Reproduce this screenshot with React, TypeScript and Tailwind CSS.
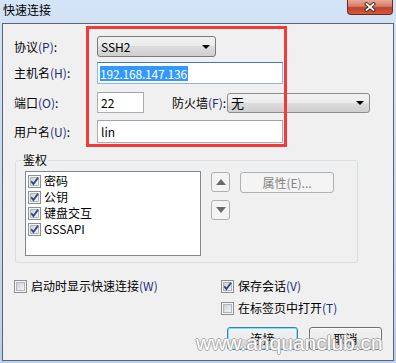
import React from "react";

const M = ({ c }: { c: string }) => <span className="text-[#1f2a7a]">({c})</span>;

function Check({ checked }: { checked?: boolean }) {
  return (
    <svg width="13" height="13" viewBox="0 0 13 13" className="shrink-0">
      <defs>
        <linearGradient id="cbg" x1="0" y1="0" x2="1" y2="1">
          <stop offset="0" stopColor="#c9ced4" />
          <stop offset="1" stopColor="#f7f7f8" />
        </linearGradient>
      </defs>
      <rect x="0.5" y="0.5" width="12" height="12" fill="#f4f4f4" stroke="#8e8f8f" />
      <rect x="2.5" y="2.5" width="8" height="8" fill="url(#cbg)" stroke="#b3b7bd" />
      {checked && (
        <path d="M3.2 6.3 L5.4 9 L10 2.8" fill="none" stroke="#2c4482" strokeWidth="1.8" />
      )}
    </svg>
  );
}

function DownTri({ color = "#000" }: { color?: string }) {
  return (
    <svg width="8" height="4" viewBox="0 0 8 4">
      <path d="M0 0 H8 L4 4 Z" fill={color} />
    </svg>
  );
}

const btnBg =
  "bg-[linear-gradient(#f2f2f2,#ebebeb_50%,#dddddd_50%,#cfcfcf)]";

export default function App() {
  return (
    <div className="relative w-[396px] h-[363px] overflow-hidden bg-[linear-gradient(#d3e4f6,#b9d1ec)] font-['Noto_Sans_CJK_SC','Liberation_Sans',sans-serif] text-[12px] leading-[16px] text-black">
      {/* title bar */}
      <div className="h-[23px] flex items-start justify-between">
        <div className="pl-[3px] pt-[2px] leading-[16px] text-[12px]">快速连接</div>
        <div className="w-[46px] h-[15px] mr-[3px] rounded-b-[4px] border border-t-0 border-[#6e2a1e] bg-[linear-gradient(#eaa898,#d57b64_45%,#c2412a_55%,#d35a40)] flex items-center justify-center">
          <svg width="12" height="10" viewBox="0 0 12 10">
            <path d="M2.5 2 L9.5 8 M9.5 2 L2.5 8" stroke="#3a2522" strokeWidth="3.6" strokeLinecap="square" />
            <path d="M2.5 2 L9.5 8 M9.5 2 L2.5 8" stroke="#ffffff" strokeWidth="1.8" strokeLinecap="square" />
          </svg>
        </div>
      </div>

      {/* client */}
      <div className="ml-[2px] w-[392px] h-[338px] border border-[#5d6670] bg-[#f0f0f0] pl-[11px]">
        {/* row 1 */}
        <div className="mt-[12px] h-[21px] flex items-center">
          <div className="w-[83px]">协议<M c="P" />:</div>
          <div className={`w-[119px] h-[21px] rounded-[3px] border border-[#7a7a7a] ${btnBg} flex items-center justify-between pl-[3px] pr-[5px]`}>
            <span>SSH2</span>
            <DownTri />
          </div>
        </div>
        {/* row 2 */}
        <div className="mt-[5px] h-[22px] flex items-center">
          <div className="w-[83px]">主机名<M c="H" />:</div>
          <div className="w-[186px] h-[22px] border border-[#86b9e9] border-t-[#3d7bad] bg-white flex items-center pl-[2px]">
            <span className="bg-[#3399ff] text-white leading-[15px] tracking-[-0.2px] pr-[1px]">192.168.147.136</span>
          </div>
        </div>
        {/* row 3 */}
        <div className="mt-[8px] h-[21px] flex items-center">
          <div className="w-[83px]">端口<M c="O" />:</div>
          <div className="w-[47px] h-[21px] border border-[#abadb3] border-t-[#a0a3aa] bg-white flex items-center pl-[3px]">22</div>
          <div className="ml-[28px] w-[55px]">防火墙<M c="F" />:</div>
          <div className={`w-[143px] h-[20px] rounded-[3px] border border-[#8c8c8c] ${btnBg} flex items-center justify-between pl-[3px] pr-[5px]`}>
            <span className="text-[13px]">无</span>
            <DownTri />
          </div>
        </div>
        {/* row 4 */}
        <div className="mt-[7px] h-[23px] flex items-center">
          <div className="w-[83px]">用户名<M c="U" />:</div>
          <div className="w-[186px] h-[23px] border border-[#abadb3] border-t-[#a0a3aa] bg-white flex items-center pl-[3px]">lin</div>
        </div>

        {/* group */}
        <fieldset className="mt-[9px] ml-[1px] w-[343px] border border-[#d5dfe5] rounded-[3px] pb-[6px]">
          <legend className="ml-[6px] px-[1px] leading-[16px]">鉴权</legend>
          <div className="flex items-start">
            <div className="ml-[9px] mt-[3px] w-[176px] h-[85px] border border-[#828790] bg-white pl-[2px] pt-[1px]">
              {["密码", "公钥", "键盘交互", "GSSAPI"].map((t) => (
                <div key={t} className="h-[16px] flex items-center gap-[3px]">
                  <Check checked />
                  <span>{t}</span>
                </div>
              ))}
            </div>
            <div className="ml-[10px] mt-[4px] flex flex-col gap-[8px]">
              <div className="w-[19px] h-[20px] rounded-[3px] border border-[#b0b0b0] bg-[#f4f4f4] flex items-center justify-center">
                <svg width="10" height="6" viewBox="0 0 10 6"><path d="M0 6 H10 L5 0 Z" fill="#6b6b6b" /></svg>
              </div>
              <div className="w-[19px] h-[20px] rounded-[3px] border border-[#b0b0b0] bg-[#f4f4f4] flex items-center justify-center">
                <svg width="10" height="6" viewBox="0 0 10 6"><path d="M0 0 H10 L5 6 Z" fill="#6b6b6b" /></svg>
              </div>
            </div>
            <div className="ml-[10px] mt-[4px] w-[94px] h-[21px] rounded-[3px] border border-[#adb2b5] bg-[#f4f4f4] flex items-center justify-center text-[#838383]">
              属性(E)...
            </div>
          </div>
        </fieldset>

        {/* bottom */}
        <div className="mt-[15px] flex">
          <div className="w-[207px] h-[16px] flex items-center gap-[4px]">
            <Check />
            <span>启动时显示快速连接<M c="W" /></span>
          </div>
          <div className="flex flex-col">
            <div className="h-[16px] flex items-center gap-[4px]">
              <Check checked />
              <span>保存会话<M c="V" /></span>
            </div>
            <div className="mt-[6px] h-[16px] flex items-center gap-[4px]">
              <Check />
              <span>在标签页中打开<M c="T" /></span>
            </div>
            <div className="mt-[11px] ml-[6px] flex gap-[11px]">
              <div className={`w-[71px] h-[23px] rounded-[3px] border border-[#3c7fb1] ${btnBg} shadow-[inset_0_0_0_1px_#7fe0fb,inset_0_0_2px_2px_#e4f6fd] flex items-center justify-center`}>
                连接
              </div>
              <div className={`w-[73px] h-[23px] rounded-[3px] border border-[#707070] ${btnBg} shadow-[inset_0_0_0_1px_#fbfbfb] flex items-center justify-center`}>
                取消
              </div>
            </div>
          </div>
        </div>
      </div>

      {/* red annotation rectangle */}
      <div className="absolute left-[86px] top-[26px] w-[201px] h-[121px] border-[3px] border-[#f23a3a]" />

      {/* watermark */}
      <div className="absolute left-[196px] top-[330px] text-[21px] leading-[26px] text-white font-['Liberation_Sans',sans-serif] [text-shadow:-1px_0_#a8a8a8,1px_0_#a8a8a8,0_-1px_#a8a8a8,0_1px_#a8a8a8]">
        www.anquanclub.cn
      </div>
    </div>
  );
}
